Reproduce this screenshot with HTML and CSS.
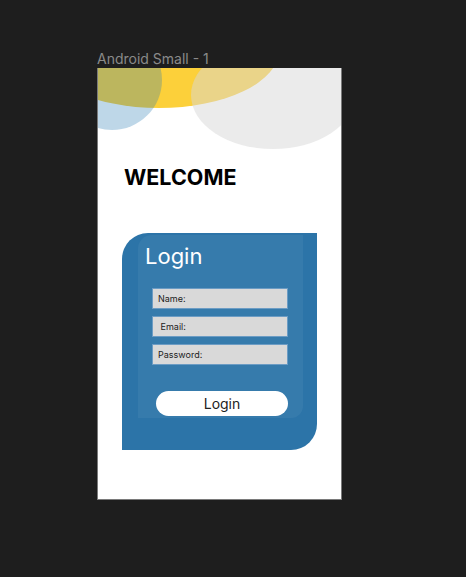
FILE: index.html
```html
<!DOCTYPE html>
<html>
<head>
<meta charset="utf-8">
<link rel="stylesheet" href="styles.css">
</head>
<body>
<div class="canvas">
  <div class="frame-label">Android Small - 1</div>
  <div class="frame">
    <div class="blob blob-yellow"></div>
    <div class="blob blob-blue"></div>
    <div class="blob blob-gray"></div>
    <h1 class="welcome">WELCOME</h1>
    <div class="card">
      <div class="panel">
        <h2 class="login-title">Login</h2>
        <div class="fields">
          <div class="field">Name:</div>
          <div class="field">&nbsp;Email:</div>
          <div class="field">Password:</div>
        </div>
        <button class="login-btn">Login</button>
      </div>
    </div>
  </div>
</div>
</body>
</html>
```
FILE: styles.css
```css
html, body {
  margin: 0;
  padding: 0;
  background: #1e1e1e;
  font-family: Inter, "Noto Sans", sans-serif;
}
.canvas {
  padding: 50px 0 0 97px;
}
.frame-label {
  color: #8a8a8a;
  font-size: 14px;
  line-height: 17px;
  height: 18px;
}
.frame {
  position: relative;
  width: 243px;
  height: 431px;
  background: #ffffff;
  border: 1px solid #7a7a7a;
  border-top: 0;
  overflow: hidden;
  display: flex;
  flex-direction: column;
}
.blob {
  position: absolute;
  border-radius: 50%;
}
.blob-yellow {
  left: -59px;
  top: -76px;
  width: 240px;
  height: 116px;
  background: #fcd03a;
}
.blob-blue {
  left: -36px;
  top: -38px;
  width: 100px;
  height: 100px;
  background: rgba(41, 121, 180, 0.3);
}
.blob-gray {
  left: 93px;
  top: -27px;
  width: 164px;
  height: 108px;
  background: rgba(216, 216, 216, 0.5);
}
.welcome {
  position: relative;
  margin: 96px 0 0 26px;
  font-size: 21.5px;
  line-height: 26px;
  font-weight: 700;
  color: #000;
}
.card {
  margin: 43px 0 0 24px;
  width: 195px;
  height: 217px;
  background: #2c74a8;
  border-radius: 26px 0 26px 0;
  padding: 2px 0 0 16px;
  box-sizing: border-box;
}
.panel {
  width: 165px;
  height: 183px;
  background: rgba(255, 255, 255, 0.05);
  border-radius: 14px 0 12px 0;
  box-sizing: border-box;
  padding: 8px 0 0 7px;
  display: flex;
  flex-direction: column;
}
.login-title {
  margin: 0;
  font-size: 22px;
  line-height: 26px;
  font-weight: 400;
  color: #ffffff;
}
.fields {
  margin: 19px 0 0 7px;
  display: flex;
  flex-direction: column;
  gap: 7px;
}
.field {
  width: 136px;
  height: 21px;
  box-sizing: border-box;
  background: #d9d9d9;
  border: 1px solid #6c9cc4;
  font-size: 9px;
  line-height: 19px;
  padding-left: 5px;
  color: #222;
}
.login-btn {
  margin: 26px 0 0 11px;
  width: 132px;
  height: 25px;
  border: 0;
  border-radius: 13px;
  background: #ffffff;
  font-family: Inter, "Noto Sans", sans-serif;
  font-size: 14px;
  color: #222;
  padding: 0;
}
```
